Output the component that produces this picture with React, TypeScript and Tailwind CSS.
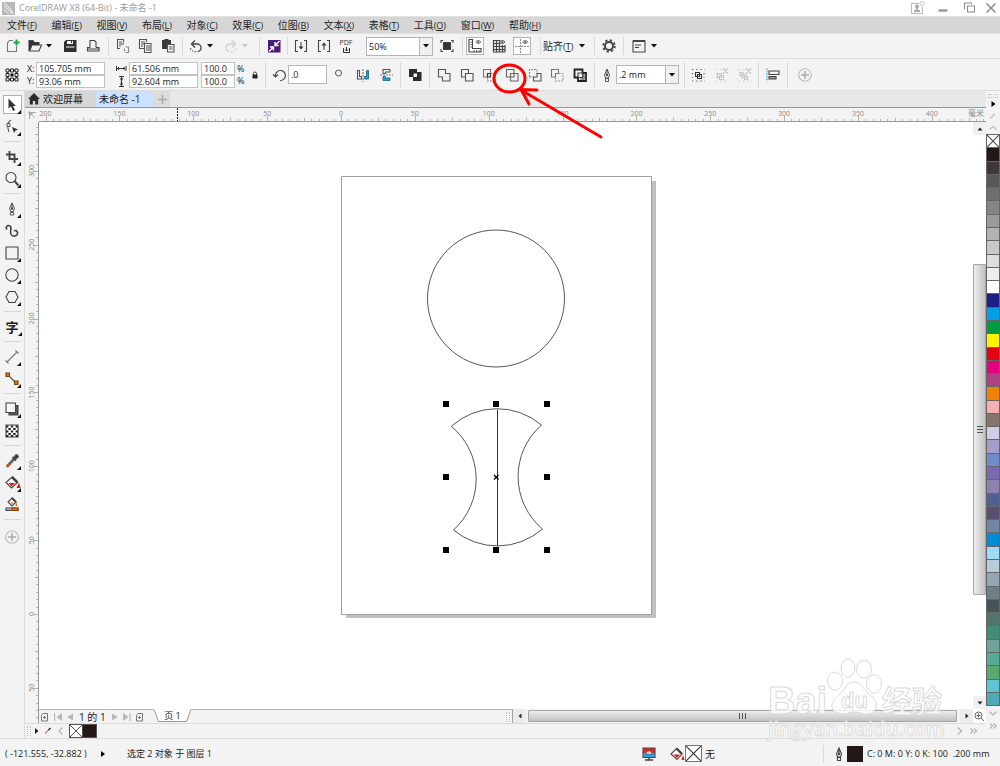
import React from "react";

const UI = "font-['Open_Sans','Noto_Sans_CJK_SC',sans-serif]";

type Kids = { children?: React.ReactNode };

function Icon({ children, className = "" }: Kids & { className?: string }) {
  return (
    <svg
      width="16"
      height="16"
      viewBox="0 0 16 16"
      fill="none"
      stroke="#444"
      strokeWidth="1.1"
      className={"block shrink-0 " + className}
      aria-hidden="true"
    >
      {children}
    </svg>
  );
}

function Tool({ label, children, className = "" }: Kids & { label: string; className?: string }) {
  return (
    <button
      type="button"
      aria-label={label}
      className={"flex h-[18px] w-[18px] shrink-0 items-center justify-center " + className}
    >
      {children}
    </button>
  );
}

function Sep({ tall = false }: { tall?: boolean }) {
  return <div className={"w-px shrink-0 bg-[#dadada] " + (tall ? "h-[26px]" : "h-[18px]")} />;
}

function Caret({ label, dim = false, className = "" }: { label: string; dim?: boolean; className?: string }) {
  return (
    <button type="button" aria-label={label} className={"flex h-4 w-2.5 shrink-0 items-center justify-center " + className}>
      <svg width="6" height="4" viewBox="0 0 6 4" aria-hidden="true">
        <path d="M0 0h6L3 3.6z" fill={dim ? "#c8c8c8" : "#111"} />
      </svg>
    </button>
  );
}

function Drop({ label, options, className }: { label: string; options: string[]; className: string }) {
  return (
    <div className={"relative flex shrink-0 border border-[#b4b4b4] bg-white " + className}>
      <select
        aria-label={label}
        className="block h-[17px] w-full appearance-none bg-transparent py-0 pl-0.5 text-[9px] leading-[17px] text-[#222] outline-none"
      >
        {options.map((o) => (
          <option key={o}>{o}</option>
        ))}
      </select>
      <span className="pointer-events-none absolute inset-y-0 right-0 flex w-[13px] items-center justify-center border-l border-[#b4b4b4] bg-[#f0f0f0]">
        <svg width="6" height="4" viewBox="0 0 6 4" aria-hidden="true">
          <path d="M0 0h6L3 3.6z" fill="#111" />
        </svg>
      </span>
    </div>
  );
}

function Field({ label, value }: { label: string; value: string }) {
  return (
    <input
      aria-label={label}
      defaultValue={value}
      className="h-[13px] w-full border border-[#c2c2c2] bg-white pl-0.5 text-[9px] leading-3 text-[#222] outline-none"
    />
  );
}

const menus: [string, string][] = [
  ["文件", "F"],
  ["编辑", "E"],
  ["视图", "V"],
  ["布局", "L"],
  ["对象", "C"],
  ["效果", "C"],
  ["位图", "B"],
  ["文本", "X"],
  ["表格", "T"],
  ["工具", "O"],
  ["窗口", "W"],
  ["帮助", "H"],
];

function TitleBar() {
  return (
    <header className="flex h-4 items-center bg-white pr-px pl-0.5">
      <svg width="13" height="13" viewBox="0 0 13 13" aria-hidden="true">
        <rect width="13" height="13" fill="#b9b9b9" />
        <path d="M2 1c3 2 7 6 9 10.500M2 4c3 2 5 4 8 7.500M1.500 7.500C4 9 5 10 6.500 12" stroke="#fff" strokeWidth="1" fill="none" />
      </svg>
      <h1 className="ml-1 text-[9px] leading-4 text-[#999]">CorelDRAW X8 (64-Bit) - 未命名 -1</h1>
      <div className="ml-auto flex items-center">
        <button type="button" aria-label="登录" className="mr-2.5">
          <Icon>
            <g stroke="#bbb">
              <path d="M10 3.500H2.500V13.500H13.500V7" />
              <circle cx="13" cy="3.500" r="2" strokeWidth=".8" />
            </g>
            <circle cx="8" cy="6.500" r="2" fill="#aaa" stroke="none" />
            <path d="M7 8h2v2h2v2H5v-2h2z" fill="#aaa" stroke="none" />
          </Icon>
        </button>
        <button type="button" aria-label="最小化" className="mr-2.5">
          <Icon>
            <path d="M3.500 10.500h9" stroke="#999" strokeWidth="2.400" />
          </Icon>
        </button>
        <button type="button" aria-label="还原" className="mr-1.5">
          <Icon>
            <path d="M6.500 6h7v6h-7zM4 9H3.500V3h7v1.500" stroke="#8c8c8c" />
          </Icon>
        </button>
        <button type="button" aria-label="关闭">
          <Icon>
            <path d="M3.500 3.500l9 9M12.500 3.500l-9 9" stroke="#8c8c8c" strokeWidth="1.500" />
          </Icon>
        </button>
      </div>
    </header>
  );
}

function MenuBar() {
  return (
    <nav className="flex h-[18px] items-center border-y border-[#e2e2e2] bg-[#d6d6d6] pl-[7px]">
      <div className="flex w-[534px] justify-between">
        {menus.map(([name, key]) => (
          <button key={name} type="button" className="text-[10px] leading-4 whitespace-nowrap text-[#1e1e1e]">
            {name}
            <span className="text-[9px]">
              (<u>{key}</u>)
            </span>
          </button>
        ))}
      </div>
    </nav>
  );
}

function StandardBar() {
  return (
    <div className="flex h-[25px] items-center border-b border-[#dcdcdc] bg-[#f3f3f3]">
      <div className="flex w-[108px] items-center pl-[3px]">
        <Tool label="新建">
          <Icon>
            <path d="M9 2.500H5.500L3.500 5v8.500h9V8" stroke="#777" />
            <path d="M11.500 1.500h2v2h2v2h-2v2h-2v-2h-2v-2h2z" fill="#19a545" stroke="none" />
          </Icon>
        </Tool>
        <Tool label="打开" className="ml-[5px]">
          <Icon>
            <path d="M2 13V2.500h4l1.500 2H12V7M2.500 13L5 7h9.500L12 13z" />
            <path d="M2 3h4l1.500 1.800H12V7H5l-2.500 6H2z" fill="#333" stroke="none" />
          </Icon>
        </Tool>
        <Caret label="打开最近" />
        <Tool label="保存" className="ml-[7px]">
          <Icon>
            <path d="M4 2h10.500v12H2V4z" fill="#2f2f2f" stroke="none" />
            <path d="M5 3h6v3H5zM4 8.500h8.500V9.500H4z" fill="#f3f3f3" stroke="none" />
            <path d="M9 3h1v2H9z" fill="#2f2f2f" stroke="none" />
          </Icon>
        </Tool>
        <Tool label="打印" className="ml-[5px]">
          <Icon>
            <path d="M5 9.500v-7h4.500L11 4v5.500M5 9.500H2.500v3.500h11.500V9.500H11M2.500 11h11.500" />
          </Icon>
        </Tool>
      </div>
      <Sep />
      <div className="flex w-[73px] items-center justify-around px-[3px]">
        <Tool label="剪切">
          <Icon>
            <path d="M5 10.500H2.500v-9h6v3M4 4h3M4 6h5M4 8h2" stroke="#555" />
            <path d="M9.500 13.500v-3M13.500 14v-5l-3 0M10.500 14.500h3.500" stroke="#888" />
          </Icon>
        </Tool>
        <Tool label="复制">
          <Icon>
            <path d="M7 10.500H2.500v-9h7V4M4 4h4M4 6h3M4 8h2" stroke="#555" />
            <path d="M7.500 5.500h6.500v9H7.500zM9 8h4M9 10h4M9 12h4" stroke="#555" fill="#f3f3f3" />
          </Icon>
        </Tool>
        <Tool label="粘贴">
          <Icon>
            <path d="M2 2h2l1-1h3l1 1h2v9H2z" fill="#3a3a3a" stroke="none" />
            <path d="M7.500 6.500h6.500v7.500H7.500zM9 9h3.500M9 11h3.500" stroke="#555" fill="#f3f3f3" />
          </Icon>
        </Tool>
      </div>
      <Sep />
      <div className="flex w-[76px] items-center pl-1">
        <Tool label="撤销">
          <Icon>
            <path d="M4 6h5a3.800 3.800 0 0 1 .5 7.600" strokeWidth="1.300" />
            <path d="M7 2.500L3.500 6 7 9.500" strokeWidth="1.300" />
            <path d="M8 13.800C5 13.500 3 12.500 2.500 10" strokeDasharray="1.300 1.500" />
          </Icon>
        </Tool>
        <Caret label="撤销列表" />
        <Tool label="重做" className="ml-[7px]">
          <Icon>
            <g stroke="#cfcfcf">
              <path d="M12 6H7a3.800 3.800 0 0 0-.5 7.600" strokeWidth="1.300" />
              <path d="M9 2.500L12.500 6 9 9.500" strokeWidth="1.300" />
              <path d="M8 13.800c3-.3 5-1.300 5.500-3.800" strokeDasharray="1.300 1.500" />
            </g>
          </Icon>
        </Tool>
        <Caret label="重做列表" dim />
      </div>
      <Sep />
      <div className="flex w-[27px] items-center justify-center">
        <Tool label="搜索内容">
          <Icon>
            <rect x="2" y="2" width="12.500" height="12.500" fill="#4c1a78" stroke="none" />
            <path d="M13.500 3L9 7.500M9 4v3.500h3.500M3 13.500L7.500 9M4 9h3.500v3.500" stroke="#fff" strokeWidth="1.400" />
          </Icon>
        </Tool>
      </div>
      <Sep />
      <div className="flex w-[174px] items-center pl-1">
        <Tool label="导入">
          <Icon>
            <path d="M5 2.500H2.500v11H5M11 2.500h2.500v11H11M8 4v7" />
            <path d="M5.500 8.500h5L8 11.500z" fill="#3a3a3a" stroke="none" />
          </Icon>
        </Tool>
        <Tool label="导出" className="ml-[5px]">
          <Icon>
            <path d="M5 2.500H2.500v11H5M11 2.500h2.500v11H11M8 12V5" />
            <path d="M5.500 7.500h5L8 4.500z" fill="#3a3a3a" stroke="none" />
          </Icon>
        </Tool>
        <button
          type="button"
          aria-label="发布为 PDF"
          className="ml-1 flex h-[18px] w-[18px] flex-col items-center justify-center"
        >
          <span className="text-[7px] leading-[8px] text-[#333]">PDF</span>
          <svg width="7" height="6" viewBox="0 0 7 6" aria-hidden="true">
            <path d="M.5 1v4.500h6V1M3.500 0v4M2 2.500L3.500 4 5 2.500" stroke="#333" fill="none" />
          </svg>
        </button>
        <Drop label="缩放级别" options={["50%", "100%", "200%"]} className="ml-[11px] h-[19px] w-[67px]" />
        <Tool label="全屏预览" className="ml-[5px]">
          <Icon>
            <path d="M4.500 4.500h7v7h-7z" fill="#333" />
            <path d="M2 5V2.500H4M12 2.500h2V5M14 11v2.500H12M4 13.500H2V11" />
          </Icon>
        </Tool>
      </div>
      <Sep />
      <div className="flex w-[77px] items-center pl-[3px]">
        <Tool label="标尺" className="border border-[#b4b4b4] bg-white">
          <Icon>
            <path d="M2 1.500h3.500v9H14V14H2z" stroke="#444" />
            <path d="M3.500 4H5M3.500 6.500H5M3.500 9H5M7 12v2M9.500 12v2M12 12v2" stroke="#444" strokeWidth=".8" />
            <path d="M8.500 4c1.500-2 4-2 5.500 0-1.500 2-4 2-5.500 0z" stroke="#666" strokeWidth=".9" />
            <circle cx="11.300" cy="4" r="1.100" fill="#555" stroke="none" />
          </Icon>
        </Tool>
        <Tool label="网格" className="ml-1.5">
          <Icon>
            <path
              d="M2 2.500h6M2 5.500h6M2 8.500h12M2 11.500h12M2 14h12M2.500 2v12M5.500 2v12M8.500 2v12M11.500 7v7M14 7v7"
              strokeWidth="1.200"
            />
            <path d="M8.500 4c1.500-2 4-2 5.500 0-1.500 2-4 2-5.500 0z" fill="#f3f3f3" strokeWidth=".9" />
            <circle cx="11.300" cy="4" r="1" fill="#555" stroke="none" />
          </Icon>
        </Tool>
        <Tool label="辅助线" className="ml-[5px] border border-[#b4b4b4] bg-white">
          <Icon>
            <path d="M1 8.500h14M6.500 1v14" stroke="#888" strokeDasharray="2 1" />
            <path d="M8.500 4c1.500-2 4-2 5.500 0-1.500 2-4 2-5.500 0z" stroke="#666" strokeWidth=".9" />
            <circle cx="11.300" cy="4" r="1.100" fill="#555" stroke="none" />
          </Icon>
        </Tool>
      </div>
      <Sep />
      <div className="flex w-[53px] items-center pl-0.5">
        <button type="button" className="text-[10px] leading-4 whitespace-nowrap text-[#1e1e1e]">
          贴齐
          <span className="text-[9px]">
            (<u>T</u>)
          </span>
        </button>
        <Caret label="贴齐选项" className="ml-1" />
      </div>
      <Sep />
      <div className="flex w-7 items-center justify-center">
        <Tool label="选项">
          <Icon>
            <circle cx="8" cy="8" r="4" strokeWidth="2" />
            <circle cx="8" cy="8" r="5.800" strokeWidth="1.800" strokeDasharray="2.280 2.280" />
          </Icon>
        </Tool>
      </div>
      <Sep />
      <div className="flex items-center pl-1.5">
        <Tool label="应用程序启动器">
          <Icon>
            <path d="M2 3h12v11H2z" />
            <path d="M2 3h12" strokeWidth="2" />
            <path d="M4 7h6M4 9.500h4" />
          </Icon>
        </Tool>
        <Caret label="启动器列表" className="ml-px" />
      </div>
    </div>
  );
}

function PropertyBar() {
  return (
    <div className="flex h-8 items-center border-b border-[#dcdcdc] bg-[#f3f3f3]">
      <div className="flex w-[265px] items-center pl-[3px]">
        <Tool label="对象原点">
          <Icon>
            <path d="M3.500 3.500h9v9h-9z" stroke="#333" />
            <path
              d="M2 2h3v3H2zM6.500 2h3v3h-3zM11 2h3v3h-3zM2 6.500h3v3H2zM11 6.500h3v3h-3zM2 11h3v3H2zM6.500 11h3v3h-3zM11 11h3v3h-3z"
              fill="#f3f3f3"
              stroke="#222"
              strokeWidth="1"
            />
            <path d="M6.500 6.500h3v3h-3z" fill="#111" stroke="none" />
          </Icon>
        </Tool>
        <div className="ml-1.5 flex w-[9px] flex-col text-[9px] leading-[12px] text-[#222]">
          <span>X:</span>
          <span>Y:</span>
        </div>
        <div className="flex w-[69px] flex-col">
          <Field label="X 坐标" value="105.705 mm" />
          <Field label="Y 坐标" value="93.06 mm" />
        </div>
        <svg width="12" height="26" viewBox="0 0 12 26" className="mr-0.5 ml-2.5" aria-hidden="true">
          <path d="M1.500 4v5M11 4v5M2 6.500h8M3.500 5v3M9 5v3" stroke="#333" fill="none" />
          <path d="M4 14.500h5M4 24.500h5M6.500 15v9M5 17h3M5 22h3" stroke="#333" strokeWidth="1.200" fill="none" />
        </svg>
        <div className="flex w-[69px] flex-col">
          <Field label="宽度" value="61.506 mm" />
          <Field label="高度" value="92.604 mm" />
        </div>
        <div className="ml-[3px] flex w-[34px] flex-col">
          <Field label="水平缩放" value="100.0" />
          <Field label="垂直缩放" value="100.0" />
        </div>
        <div className="ml-0.5 flex w-2.5 flex-col text-[9px] leading-[12px] text-[#222]">
          <span>%</span>
          <span>%</span>
        </div>
        <button type="button" aria-label="锁定比率" className="ml-[3px] flex w-2.5 justify-center">
          <svg width="6" height="8" viewBox="0 0 6 8" aria-hidden="true">
            <path d="M1.500 4V2.500a1.500 1.500 0 0 1 3 0V4" stroke="#444" fill="none" />
            <path d="M.5 3.500h5v4h-5z" fill="#222" />
          </svg>
        </button>
      </div>
      <Sep tall />
      <div className="flex w-[134px] items-center pl-1.5">
        <Icon>
          <path d="M3.500 9.500A5 5 0 1 1 8 13.500" />
          <path d="M1 7.500L3.500 10 6 7.500" />
        </Icon>
        <input
          aria-label="旋转角度"
          defaultValue=".0"
          className="h-[19px] w-[39px] border border-[#b9b9b9] bg-white pl-0.5 text-[9px] text-[#222] outline-none"
        />
        <svg width="9" height="14" viewBox="0 0 9 14" className="ml-[7px]" aria-hidden="true">
          <circle cx="4.500" cy="5" r="3" stroke="#555" fill="none" />
        </svg>
        <Tool label="水平镜像" className="ml-[11px]">
          <Icon>
            <path d="M2.500 3.500v8.500h4V9.500H4.500v-6z" stroke="#555" />
            <path d="M8 2v13" stroke="#777" strokeDasharray="2 1" />
            <path d="M13.500 3.500v8.500h-4V9.500h2v-6z" fill="#1ba1e2" stroke="#22698e" strokeWidth=".9" />
          </Icon>
        </Tool>
        <Tool label="垂直镜像" className="ml-[5px]">
          <Icon>
            <path d="M12 2.500H5v4h2.500V5H12z" stroke="#555" />
            <path d="M2 8h13" stroke="#777" strokeDasharray="2 1" />
            <path d="M12 13.500H5v-4h2.500V11H12z" fill="#1ba1e2" stroke="#22698e" strokeWidth=".9" />
          </Icon>
        </Tool>
      </div>
      <Sep tall />
      <div className="flex w-7 items-center justify-center">
        <Tool label="合并">
          <Icon>
            <path d="M2 2h8v3h4.500v9H6v-4H2z" fill="#2b2b2b" stroke="none" />
            <path d="M6.500 6.500h3.500v3.500H6.500z" fill="#f3f3f3" stroke="none" />
          </Icon>
        </Tool>
      </div>
      <Sep tall />
      <div className="flex w-[164px] items-center justify-between px-[5px]">
        <Tool label="焊接">
          <Icon>
            <path d="M2.500 2.500h7v4h4.500v7.500H6.500v-4h-4z" stroke="#555" />
          </Icon>
        </Tool>
        <Tool label="修剪">
          <Icon>
            <path d="M2.500 2.500h7v4h-3v3.500h-4zM6.500 6.500h7.500v7.500H6.500z" stroke="#555" />
          </Icon>
        </Tool>
        <Tool label="相交">
          <Icon>
            <path d="M2.500 2.500h7v4h-3v3.500h-4z" stroke="#777" />
            <path d="M6.500 6.500h3v3.500h-3z" stroke="#333" />
            <path d="M9.500 6.500H14v7.500H6.500V10" stroke="#888" strokeDasharray="2 1" />
          </Icon>
        </Tool>
        <Tool label="简化">
          <Icon>
            <path d="M2.500 2.500h7.500v7.500H2.500zM6.500 6.500h7.500v7.500H6.500z" stroke="#666" />
          </Icon>
        </Tool>
        <Tool label="移除后面对象">
          <Icon>
            <path d="M2.500 10V2.500h7.500v4M2.500 10h4" stroke="#888" strokeDasharray="2 1" />
            <path d="M10 6.500h4v7.500H6.500v-4H10z" stroke="#555" />
          </Icon>
        </Tool>
        <Tool label="移除前面对象">
          <Icon>
            <path d="M2.500 2.500h7v4h-3v3.500h-4z" stroke="#777" />
            <path d="M9.500 6.500H14v7.500H6.500V10" stroke="#999" strokeDasharray="2 1" />
          </Icon>
        </Tool>
        <Tool label="边界">
          <Icon>
            <path d="M2.500 2.500h8v3.500H14v8H6v-3.500H2.500z" stroke="#222" strokeWidth="1.800" />
            <path d="M6 6h4.500v4.500H6zM10 8h2v4H8" stroke="#444" />
          </Icon>
        </Tool>
      </div>
      <Sep tall />
      <div className="flex w-[89px] items-center pl-1">
        <Icon>
          <path d="M8 2L5.500 8l1 3h3l1-3zM8 2v5" strokeWidth=".9" />
          <path d="M6.500 11.500h3v3h-3z" strokeWidth=".9" />
          <circle cx="8" cy="8" r=".6" fill="#333" />
        </Icon>
        <Drop label="轮廓宽度" options={[".2 mm", ".5 mm", "1.0 mm"]} className="ml-px h-[19px] w-[63px]" />
      </div>
      <Sep tall />
      <div className="flex w-[73px] items-center justify-between px-1">
        <Tool label="组合对象">
          <Icon>
            <path d="M2 2.500h13M2 14h13M2.500 6v5M14 6v5" stroke="#555" strokeDasharray="1.200 3" />
            <path d="M5.500 5.500h4v4h-4zM7.500 7.500h4v4h-4z" stroke="#333" />
          </Icon>
        </Tool>
        <Tool label="取消组合对象">
          <Icon>
            <g stroke="#c4c4c4">
              <path d="M2 2.500h6M2 14h13M2.500 6v5" strokeDasharray="1.200 3" />
              <path d="M3.500 6.500h4v4h-4zM5.500 8.500h4v4h-4zM9 1.500l5 5M14 1.500l-5 5" />
            </g>
          </Icon>
        </Tool>
        <Tool label="取消组合所有对象">
          <Icon>
            <g stroke="#c4c4c4">
              <path d="M2 2.500h6M2 14h13" strokeDasharray="1.200 3" />
              <path d="M3 5.500h3v3H3zM5 7.500h3v3H5zM7.500 9.500h3v3h-3zM9 1.500l5 5M14 1.500l-5 5" />
            </g>
          </Icon>
        </Tool>
      </div>
      <Sep tall />
      <div className="flex w-7 items-center justify-center">
        <Tool label="对齐与分布">
          <Icon>
            <path d="M2 1.500v13" stroke="#1ba1e2" strokeDasharray="1.500 1" />
            <path d="M4 4h10v3.500H4z" stroke="#444" />
            <path d="M4 9.500h7v2.500H4z" stroke="#444" fill="#999" />
          </Icon>
        </Tool>
      </div>
      <Sep tall />
      <div className="flex items-center pl-2">
        <Tool label="快速自定义">
          <Icon>
            <circle cx="8" cy="8" r="6.300" stroke="#bcbcbc" />
            <path d="M8 4v8M4 8h8" stroke="#aaa" strokeWidth="1.500" />
          </Icon>
        </Tool>
      </div>
    </div>
  );
}

function BoxTool({ label, children, flyout = false, active = false }: Kids & { label: string; flyout?: boolean; active?: boolean }) {
  return (
    <button
      type="button"
      aria-label={label}
      className={"flex h-[19px] w-[19px] items-center justify-center " + (active ? "border border-[#b0b0b0] bg-white" : "")}
    >
      <svg
        width="18"
        height="18"
        viewBox="0 0 18 18"
        fill="none"
        stroke="#444"
        strokeWidth="1.1"
        className="shrink-0"
        aria-hidden="true"
      >
        {children}
        {flyout && <path d="M18 14v4h-4z" fill="#111" stroke="none" />}
      </svg>
    </button>
  );
}

function Rule() {
  return <div className="h-px w-[17px] shrink-0 bg-[#d6d6d6]" />;
}

function ToolGroup({ children }: Kids) {
  return <div className="flex flex-col gap-[3px]">{children}</div>;
}

function Toolbox() {
  return (
    <aside className="flex w-[25px] shrink-0 flex-col items-center gap-[5px] border-r border-[#dcdcdc] bg-[#f3f3f3] pt-1">
      <ToolGroup>
        <BoxTool label="选择工具" flyout active>
          <path d="M5.500 2.500v10l2.500-2 2 4.500 2-1-2-4h3z" fill="#333" stroke="none" />
        </BoxTool>
        <BoxTool label="形状工具" flyout>
          <path d="M8 2C4.500 4 4 9 6 14" stroke="#555" />
          <path d="M4 5.500h3v3H4z" fill="#f3f3f3" strokeWidth=".9" />
          <path d="M9 9l6 2.500-2.500 1L11 15z" fill="#333" stroke="none" />
        </BoxTool>
      </ToolGroup>
      <Rule />
      <ToolGroup>
        <BoxTool label="裁剪工具" flyout>
          <path d="M6.500 3v8H15M3 6.500h8.500V15" strokeWidth="1.900" />
        </BoxTool>
        <BoxTool label="缩放工具" flyout>
          <circle cx="8" cy="7.500" r="5" />
          <path d="M11.500 11l4 4.500" strokeWidth="2" />
        </BoxTool>
      </ToolGroup>
      <Rule />
      <ToolGroup>
        <BoxTool label="钢笔工具" flyout>
          <path d="M9 3L6.500 8.500l1.200 3h2.600l1.200-3zM9 3v4.500M7.300 12.500h3.400V15H7.300z" strokeWidth=".9" />
          <circle cx="9" cy="8.500" r=".8" fill="#333" />
        </BoxTool>
        <BoxTool label="手绘工具">
          <path d="M4 7.500C2 5 4.500 2.500 7 4c3 2-1.500 6 1.500 9 2.500 2.300 6.500.5 6-2.500-.3-2-2.500-2.500-3.500-1.500" strokeWidth="1.600" />
        </BoxTool>
        <BoxTool label="矩形工具" flyout>
          <path d="M3 3h12v12H3z" />
        </BoxTool>
        <BoxTool label="椭圆形工具" flyout>
          <circle cx="9" cy="9" r="6.200" />
        </BoxTool>
        <BoxTool label="多边形工具" flyout>
          <path d="M6 3.500h6l3 5.500-3 5.500H6L3 9z" />
        </BoxTool>
      </ToolGroup>
      <Rule />
      <button
        type="button"
        aria-label="文本工具"
        className="relative flex h-[19px] w-[19px] items-center justify-center text-[13px] leading-4 font-bold text-[#222]"
      >
        字
        <svg width="4" height="4" viewBox="0 0 4 4" className="absolute right-0 bottom-0" aria-hidden="true">
          <path d="M4 0v4H0z" fill="#111" />
        </svg>
      </button>
      <Rule />
      <ToolGroup>
        <BoxTool label="平行度量工具" flyout>
          <path d="M4 14L14 4M2.500 12.500l3 3M12.500 2.500l3 3" stroke="#777" />
        </BoxTool>
        <BoxTool label="直线连接器工具" flyout>
          <path d="M5 5l8 8" stroke="#555" />
          <path d="M3 3h3.500v3.500H3zM11.500 11H15v3.500h-3.500z" fill="#e8710a" stroke="#7a4310" />
        </BoxTool>
      </ToolGroup>
      <Rule />
      <ToolGroup>
        <BoxTool label="阴影工具" flyout>
          <path d="M13 5.500h2V15H6v-2z" fill="#555" stroke="#444" />
          <path d="M3 3h9.500v9.500H3z" fill="#f5f5f5" />
        </BoxTool>
        <BoxTool label="透明度工具">
          <path d="M3 3h12v12H3z" fill="#fff" />
          <path d="M3 4.500h12M3 9.500h12M3 14h12" stroke="#222" strokeWidth="2.200" strokeDasharray="2.400 2.400" />
          <path d="M5.400 7h10M5.400 12h10" stroke="#222" strokeWidth="2.200" strokeDasharray="2.400 2.400" />
        </BoxTool>
      </ToolGroup>
      <Rule />
      <ToolGroup>
        <BoxTool label="颜色滴管工具" flyout>
          <path d="M11 7l-7 7.500" stroke="#666" strokeWidth="2.800" />
          <path d="M7 11.500l-3.500 3.500" stroke="#c9590c" strokeWidth="2.200" />
          <path d="M9.500 5l3.500 3.500M11 7l2.500-2.500" strokeWidth="2" />
          <circle cx="13.500" cy="4.500" r="1.700" fill="#333" />
        </BoxTool>
        <BoxTool label="交互式填充工具" flyout>
          <path d="M9 3l5.500 5.500L8.500 14 3 8.500z" fill="#fff" />
          <path d="M9 3l5.500 5.500" strokeWidth="2.500" />
          <path d="M5.500 9h6.500l-3.500 3.500z" fill="#e11" stroke="none" />
          <path d="M16 8.500l1.500 5.500h-4z" fill="#e11" stroke="none" />
        </BoxTool>
        <BoxTool label="智能填充工具">
          <path d="M9 2l4 4-4 4-4-4z" fill="#fff" />
          <path d="M9 2l4 4" strokeWidth="2" />
          <path d="M7.500 6.500h3L9 8.500zM13 5l1.500 5h-2z" fill="#e8710a" stroke="none" />
          <path d="M3 12h12v2.500H3z" fill="#bbb" />
          <path d="M9 12h6v2.500H9z" fill="#e8710a" stroke="#8a460a" />
        </BoxTool>
      </ToolGroup>
      <Rule />
      <div className="pt-0.5">
        <BoxTool label="自定义工具箱">
          <circle cx="9" cy="9" r="6.300" stroke="#bcbcbc" />
          <path d="M9 5v8M5 9h8" stroke="#aaa" strokeWidth="1.500" />
        </BoxTool>
      </div>
    </aside>
  );
}

const PITCH = 73.85;

function HorizontalRuler() {
  const zero = 302;
  const ticks = Array.from({ length: 129 }, (_, i) => i - 41);
  const majors = Array.from({ length: 13 }, (_, i) => i - 4);
  return (
    <svg className="h-full w-full" aria-label="水平标尺">
      {ticks.map((t) => {
        const h = t % 10 === 0 ? 5 : t % 5 === 0 ? 3 : 2;
        const x = Math.round(zero + (t * PITCH) / 10) + 0.5;
        return <path key={t} d={`M${x} ${13 - h}V13`} stroke="#b4b4b4" />;
      })}
      {majors.map((m) => (
        <text key={m} x={zero + m * PITCH} y="8" fontSize="7" textAnchor="middle" fill="#8c8c8c">
          {Math.abs(m) * 50}
        </text>
      ))}
      <path d="M138.500 0V13" stroke="#222" strokeDasharray="2 1" />
    </svg>
  );
}

function VerticalRuler() {
  const zero = 492;
  const ticks = Array.from({ length: 83 }, (_, i) => i - 14);
  const majors = [-1, 0, 1, 2, 3, 4, 5, 6];
  return (
    <svg className="h-full w-full" aria-label="垂直标尺">
      {ticks.map((t) => {
        const w = t % 10 === 0 ? 5 : t % 5 === 0 ? 3 : 2;
        const y = Math.round(zero - (t * PITCH) / 10) + 0.5;
        return <path key={t} d={`M${13 - w} ${y}H13`} stroke="#b4b4b4" />;
      })}
      {majors.map((m) => {
        const y = zero - m * PITCH;
        return (
          <text key={m} x="9" y={y} transform={`rotate(-90 9 ${y})`} fontSize="7" textAnchor="middle" fill="#8c8c8c">
            {Math.abs(m) * 50}
          </text>
        );
      })}
    </svg>
  );
}

function Drawing() {
  const xs = [404, 454, 505];
  const ys = [279, 352, 425];
  return (
    <svg className="h-full w-full" aria-label="绘图页面">
      <path d="M307 59h310v437H307z" fill="#c0c0c0" />
      <path d="M302.500 54.500h310v438h-310z" fill="#fff" stroke="#a0a0a0" />
      <g fill="none" stroke="#5c5454" strokeWidth="1">
        <circle cx="457" cy="176.500" r="68.500" />
        <path d="M412.300 304.300A68.500 68.500 0 0 1 502.500 303A68.500 68.500 0 0 0 503.500 407A68.500 68.500 0 0 1 414.500 408A68.500 68.500 0 0 0 412.300 304.300Z" />
        <path d="M458.500 287.500V424" stroke="#333" />
      </g>
      {ys.map((y) =>
        xs.map((x) =>
          x === 454 && y === 352 ? null : <rect key={x + "-" + y} x={x} y={y} width="6" height="6" fill="#000" />,
        ),
      )}
      <path d="M455 353l4.500 4.500M459.500 353l-4.500 4.500" stroke="#000" strokeWidth="1.300" />
    </svg>
  );
}

function SmallArrow({ d, color = "#222" }: { d: string; color?: string }) {
  return (
    <svg width="12" height="12" viewBox="0 0 12 12" aria-hidden="true">
      <path d={d} fill={color} />
    </svg>
  );
}

function PageIcon() {
  return (
    <svg width="9" height="10" viewBox="0 0 9 10" fill="none" stroke="#777" aria-hidden="true">
      <path d="M3 1.500h4.500v7.500H1.500V3.500z" />
      <path d="M3 5.500h3M4.500 4v3" />
    </svg>
  );
}

function PageBar() {
  return (
    <div className="flex h-3.5 shrink-0 items-stretch bg-[#f3f3f3]">
      <div className="flex w-[474px] shrink-0 border-r border-[#a5a5a5]">
        <div className="flex w-[115px] items-center border-t border-[#b5b5b5] pt-px pl-px">
          <button type="button" aria-label="在前面添加页">
            <PageIcon />
          </button>
          <button type="button" aria-label="第一页" className="ml-1">
            <SmallArrow d="M1 2h1.200v8H1zM9 2v8L3.500 6z" color="#b8b8b8" />
          </button>
          <button type="button" aria-label="上一页">
            <SmallArrow d="M8 2.500v7L2 6z" color="#b8b8b8" />
          </button>
          <span className="ml-0.5 text-[10px] leading-3 whitespace-pre text-[#222]">1 的 1</span>
          <button type="button" aria-label="下一页" className="ml-0.5">
            <SmallArrow d="M4 2.500v7l6-3.500z" color="#b8b8b8" />
          </button>
          <button type="button" aria-label="最后一页">
            <SmallArrow d="M3 2v8l5.500-4zM9.500 2h1.200v8H9.500z" color="#b8b8b8" />
          </button>
          <button type="button" aria-label="在后面添加页" className="ml-[3px]">
            <PageIcon />
          </button>
        </div>
        <div className="relative flex w-[37px] items-center justify-center">
          <svg width="37" height="14" viewBox="0 0 37 14" className="absolute inset-0" aria-hidden="true">
            <path d="M0 .5L4.500 12.500h28L37 .5" fill="#fff" stroke="#999" />
          </svg>
          <button type="button" className="relative text-[9px] leading-3 text-[#222]">
            页 1
          </button>
        </div>
        <div className="flex flex-1 items-center justify-end border-t border-[#b5b5b5] pr-0.5">
          <span className="h-2.5 w-1 border-x border-dotted border-[#c0c0c0]" />
        </div>
      </div>
      <button type="button" aria-label="向左滚动" className="flex w-[13px] items-center justify-center bg-[#ececec]">
        <SmallArrow d="M7.500 3.500v5L4.500 6z" />
      </button>
      <div className="flex min-w-0 flex-1 items-center pl-0.5">
        <div className="flex h-3 flex-1 items-center justify-center rounded-[1px] border border-[#a5a5a5] bg-gradient-to-b from-[#ededed] to-[#c2c2c2]">
          <span className="h-1.5 w-[7px] border-x border-[#555] px-px">
            <span className="mx-auto block h-full w-px bg-[#555]" />
          </span>
        </div>
      </div>
      <button type="button" aria-label="向右滚动" className="ml-[3px] flex w-[13px] items-center justify-center bg-[#ececec]">
        <SmallArrow d="M4.500 3.500v5l3-2.500z" />
      </button>
      <button type="button" aria-label="导航器" className="flex w-[13px] items-center justify-center bg-white">
        <svg width="11" height="11" viewBox="0 0 11 11" fill="none" stroke="#666" aria-hidden="true">
          <circle cx="4.500" cy="4.500" r="3.500" />
          <path d="M4.500 2.500v4M2.500 4.500h4M7 7l3 3" />
        </svg>
      </button>
    </div>
  );
}

function Workspace() {
  return (
    <main className="flex min-w-0 flex-1 flex-col">
      <div className="flex h-4 shrink-0 bg-[#e8e8e8] text-[10px] leading-4 text-[#1a1a1a]">
        <button type="button" className="flex w-[71px] items-center gap-[3px] bg-[#d6d6d6] pl-[3px] whitespace-nowrap">
          <svg width="12" height="12" viewBox="0 0 12 12" aria-hidden="true">
            <path d="M6 0L0 6h1.800v5.500h3V8h2.400v3.500h3V6H12z" fill="#2b2b2b" />
          </svg>
          <span>欢迎屏幕</span>
        </button>
        <button type="button" className="w-[58px] bg-[#cce1ff] pl-[3px] text-left whitespace-nowrap">
          未命名 -1
        </button>
        <button type="button" aria-label="新建文档" className="flex w-4 items-center justify-center bg-[#dcdcdc]">
          <svg width="9" height="9" viewBox="0 0 9 9" aria-hidden="true">
            <path d="M4.500 0v9M0 4.500h9" stroke="#aaa" strokeWidth="1.500" />
          </svg>
        </button>
      </div>
      <div className="h-px shrink-0 bg-[#3db4ec]" />
      <div className="flex h-3.5 shrink-0 bg-[#f3f3f3]">
        <div className="flex w-3.5 items-center justify-center">
          <svg width="10" height="10" viewBox="0 0 10 10" fill="none" stroke="#aaa" aria-hidden="true">
            <path d="M1 2.500h8M2.500 1v8M3 3l5 5" />
            <path d="M3 3h3L3 6z" fill="#aaa" />
          </svg>
        </div>
        <div className="relative min-w-0 flex-1 border-b border-[#999]">
          <HorizontalRuler />
          <span className="absolute top-0 right-0.5 bg-[#f3f3f3] text-[8px] leading-[10px] text-[#888]">毫米</span>
        </div>
      </div>
      <div className="flex min-h-0 flex-1">
        <div className="w-3.5 shrink-0 border-r border-[#999] bg-[#f3f3f3]">
          <VerticalRuler />
        </div>
        <div className="flex min-w-0 flex-1 flex-col">
          <div className="flex min-h-0 flex-1 bg-white">
            <div className="min-w-0 flex-1">
              <Drawing />
            </div>
            <div className="flex w-[13px] flex-col items-center">
              <button type="button" aria-label="向上滚动" className="flex h-[13px] w-[13px] items-center justify-center bg-[#f0f0f0]">
                <SmallArrow d="M3.500 7.500h5L6 4.500z" />
              </button>
              <div className="flex w-full flex-1 flex-col">
                <div className="basis-[23%]" />
                <div className="flex basis-[59%] flex-col items-center justify-center rounded-[1px] border border-[#a5a5a5] bg-gradient-to-r from-[#ededed] to-[#c2c2c2]">
                  <span className="h-[7px] w-1.5 border-y border-[#555] py-0.5">
                    <span className="block h-px w-full bg-[#555]" />
                  </span>
                </div>
              </div>
              <button type="button" aria-label="向下滚动" className="flex h-[13px] w-[13px] items-center justify-center bg-[#f0f0f0]">
                <SmallArrow d="M3.500 4.500h5L6 7.500z" />
              </button>
            </div>
          </div>
          <PageBar />
        </div>
      </div>
      <div className="flex h-[15px] shrink-0 items-center border-t border-[#dcdcdc] bg-[#f3f3f3] pl-0.5">
        <span className="h-2.5 w-1 border-x border-dotted border-[#c0c0c0]" />
        <button type="button" aria-label="文档调色板菜单">
          <SmallArrow d="M4 3v6l3.500-3z" />
        </button>
        <button type="button" aria-label="文档滴管">
          <svg width="12" height="12" viewBox="0 0 12 12" aria-hidden="true">
            <path d="M2 8.500l4-4" stroke="#b88" strokeWidth="1.200" />
            <path d="M5.500 5l2-2" stroke="#333" strokeWidth="1.600" />
          </svg>
        </button>
        <button type="button" aria-label="上一组">
          <svg width="12" height="12" viewBox="0 0 12 12" fill="none" stroke="#c0c0c0" strokeWidth="1.500" aria-hidden="true">
            <path d="M7.500 2.500L4 6l3.500 3.500" />
          </svg>
        </button>
        <button type="button" aria-label="无色" className="ml-0.5 border border-[#555] bg-white">
          <svg width="12" height="12" viewBox="0 0 12 12" stroke="#555" aria-hidden="true">
            <path d="M0 0l12 12M12 0L0 12" />
          </svg>
        </button>
        <button type="button" aria-label="黑" className="h-3.5 w-3.5 border border-l-0 border-[#555] bg-[#231815]" />
        <div className="mr-1.5 ml-auto flex gap-0.5">
          <svg width="12" height="12" viewBox="0 0 12 12" fill="none" stroke="#b5b5b5" strokeWidth="1.300" aria-hidden="true">
            <path d="M4 2.500L7.500 6 4 9.500" />
          </svg>
          <svg width="12" height="12" viewBox="0 0 12 12" fill="none" stroke="#b5b5b5" strokeWidth="1.300" aria-hidden="true">
            <path d="M2.500 3.500L5 6 2.500 8.500M6 3.500L8.500 6 6 8.500" />
          </svg>
        </div>
      </div>
    </main>
  );
}

const swatches = [
  "#231815", "#3e3637", "#595757", "#6f6f6f", "#858585", "#9a9c9b", "#b1b3b2", "#c8caca", "#dcdddd", "#eeeeee",
  "#ffffff", "#1d2088", "#00a0e9", "#009944", "#fff100", "#e60012", "#e4007f", "#ae4084", "#f08300", "#f4b1b1",
  "#87746a", "#d0cde6", "#a79bcb", "#6f8dcb", "#7a69ae", "#8f82ae", "#4d6293", "#5a4f6e", "#6f87a3", "#008cd6",
  "#9fd9f6", "#b7cdd9", "#95a8b2", "#6e7f87", "#47525a", "#51746f", "#438c7a", "#72a09a", "#56ab98", "#5ba870",
  "#5ec4d1", "#4fa9b7",
];

function Palette() {
  return (
    <aside className="flex w-3.5 shrink-0 flex-col items-center bg-[#f3f3f3]">
      <span className="mt-[3px] h-1 w-2.5 border-y border-dotted border-[#c0c0c0]" />
      <button type="button" aria-label="调色板菜单" className="h-3">
        <SmallArrow d="M4.500 3v6l4-3z" color="#000" />
      </button>
      <svg width="12" height="12" viewBox="0 0 12 12" aria-hidden="true">
        <path d="M3 8.500l5-5" stroke="#c4c4c4" strokeWidth="1.500" />
      </svg>
      <svg width="12" height="12" viewBox="0 0 12 12" fill="none" stroke="#c4c4c4" strokeWidth="1.500" aria-hidden="true">
        <path d="M2.500 7.500L6 4.500l3.500 3" />
      </svg>
      <div className="flex min-h-0 w-full flex-1 flex-col border border-[#666]">
        <button type="button" aria-label="无色" className="min-h-0 flex-1 bg-white">
          <svg className="h-full w-full" viewBox="0 0 12 12" preserveAspectRatio="none" stroke="#444" aria-hidden="true">
            <path d="M0 0l12 12M12 0L0 12" />
          </svg>
        </button>
        {swatches.map((c) => (
          <button
            key={c}
            type="button"
            aria-label={c}
            className="min-h-0 flex-1 border-t border-[#666]"
            style={{ backgroundColor: c }}
          />
        ))}
      </div>
      <div className="flex h-8 flex-col items-center pt-0.5">
        <svg width="12" height="12" viewBox="0 0 12 12" fill="none" stroke="#b5b5b5" strokeWidth="1.300" aria-hidden="true">
          <path d="M2.500 3.500L6 7l3.500-3.500" />
        </svg>
        <svg width="12" height="12" viewBox="0 0 12 12" fill="none" stroke="#b5b5b5" strokeWidth="1.300" aria-hidden="true">
          <path d="M3 3.500L5.500 6 3 8.500M6.500 3.500L9 6 6.500 8.500" />
        </svg>
      </div>
    </aside>
  );
}

function StatusBar() {
  return (
    <footer className="flex h-7 shrink-0 items-center border-t border-[#dcdcdc] bg-[#f3f3f3] pt-0.5 text-[9px] leading-4 text-[#222]">
      <span className="w-[97px] pl-[5px] whitespace-nowrap">( -121.555, -32.882 )</span>
      <button type="button" aria-label="坐标显示" className="w-[30px]">
        <SmallArrow d="M4 3v6l4-3z" color="#000" />
      </button>
      <span className="flex-1 whitespace-nowrap">选定 2 对象 于 图层 1</span>
      <div className="flex w-[182px] items-center">
        <Icon>
          <path d="M2 2h12v9.500H2z" fill="#e22" stroke="#444" />
          <path d="M2.500 7h11v4h-11z" fill="#2aa5e8" stroke="none" />
          <path d="M4.500 7c2-3 5-3 7 0-2 2.500-5 2.500-7 0z" fill="#ccc" strokeWidth=".8" />
          <path d="M4 14h8M8 12v2" strokeWidth="1.500" />
        </Icon>
        <Icon className="ml-3">
          <path d="M7.500 2.500L13 8l-5 5.500L2 8z" fill="#fff" />
          <path d="M7.500 2.500L13 8" strokeWidth="2.400" />
          <path d="M4.500 8.500h6.500l-3 3.500z" fill="#e11" stroke="none" />
          <path d="M14 9l1.500 5h-3z" fill="#e11" stroke="none" />
        </Icon>
        <span className="flex h-[17px] w-[17px] items-center justify-center border border-[#777] bg-white">
          <svg width="15" height="15" viewBox="0 0 15 15" stroke="#333" strokeWidth="1.100" aria-hidden="true">
            <path d="M0 0l15 15M15 0L0 15" />
          </svg>
        </span>
        <span className="ml-[3px] text-[10px]">无</span>
      </div>
      <Sep />
      <div className="flex w-[176px] items-center pl-[7px]">
        <Icon>
          <path d="M8 2L5.500 8l1 3h3l1-3zM8 2v5" />
          <path d="M6.500 11.500h3v3h-3z" />
          <circle cx="8" cy="8" r=".8" fill="#333" />
        </Icon>
        <span className="h-4 w-4 bg-[#231815]" />
        <span className="ml-1 whitespace-pre">C: 0 M: 0 Y: 0 K: 100  .200 mm</span>
      </div>
    </footer>
  );
}

function Annotation() {
  return (
    <svg
      width="130"
      height="85"
      viewBox="485 58 130 85"
      className="pointer-events-none absolute top-[58px] left-[485px]"
      fill="none"
      stroke="#ff0000"
      strokeWidth="3"
      strokeLinecap="round"
      aria-hidden="true"
    >
      <ellipse cx="509.500" cy="78.500" rx="15.500" ry="13.500" />
      <path d="M601 137L521 90M537 90l-16-.5 8 14.500" />
    </svg>
  );
}

function Watermark() {
  return (
    <svg
      width="190"
      height="100"
      viewBox="0 0 190 100"
      className="pointer-events-none absolute right-[46px] bottom-[10px]"
      fill="#ffffff"
      fillOpacity="0.8"
      stroke="#dadada"
      strokeWidth="1"
      strokeLinejoin="round"
      aria-hidden="true"
    >
      <ellipse cx="71" cy="25" rx="7.500" ry="9" />
      <ellipse cx="84" cy="12" rx="7" ry="9" />
      <ellipse cx="100" cy="13" rx="7.500" ry="9" />
      <ellipse cx="110" cy="28" rx="7.500" ry="9" />
      <path d="M90 26c7 0 9 6 14 11 6 5 9 9 8 14-1 6-7 8-12 7-4-1-6-2-10-2s-6 2-10 2c-6 0-12-2-12-8 0-5 4-8 8-12 5-5 7-12 14-12z" />
      <g className="font-['Liberation_Sans',sans-serif]" fontWeight="bold">
        <text x="4" y="58" fontSize="38">Bai</text>
        <text x="77" y="52" fontSize="22">du</text>
      </g>
      <text x="118" y="56" fontSize="30" fontWeight="bold">经验</text>
      <text x="4" y="80" fontSize="20" fontWeight="600" strokeWidth=".8">jingyan.baidu.com</text>
    </svg>
  );
}

export default function App() {
  return (
    <div className={"relative flex h-screen flex-col overflow-hidden bg-[#f3f3f3] " + UI}>
      <TitleBar />
      <MenuBar />
      <StandardBar />
      <PropertyBar />
      <div className="flex min-h-0 flex-1">
        <Toolbox />
        <Workspace />
        <Palette />
      </div>
      <StatusBar />
      <Watermark />
      <Annotation />
    </div>
  );
}
